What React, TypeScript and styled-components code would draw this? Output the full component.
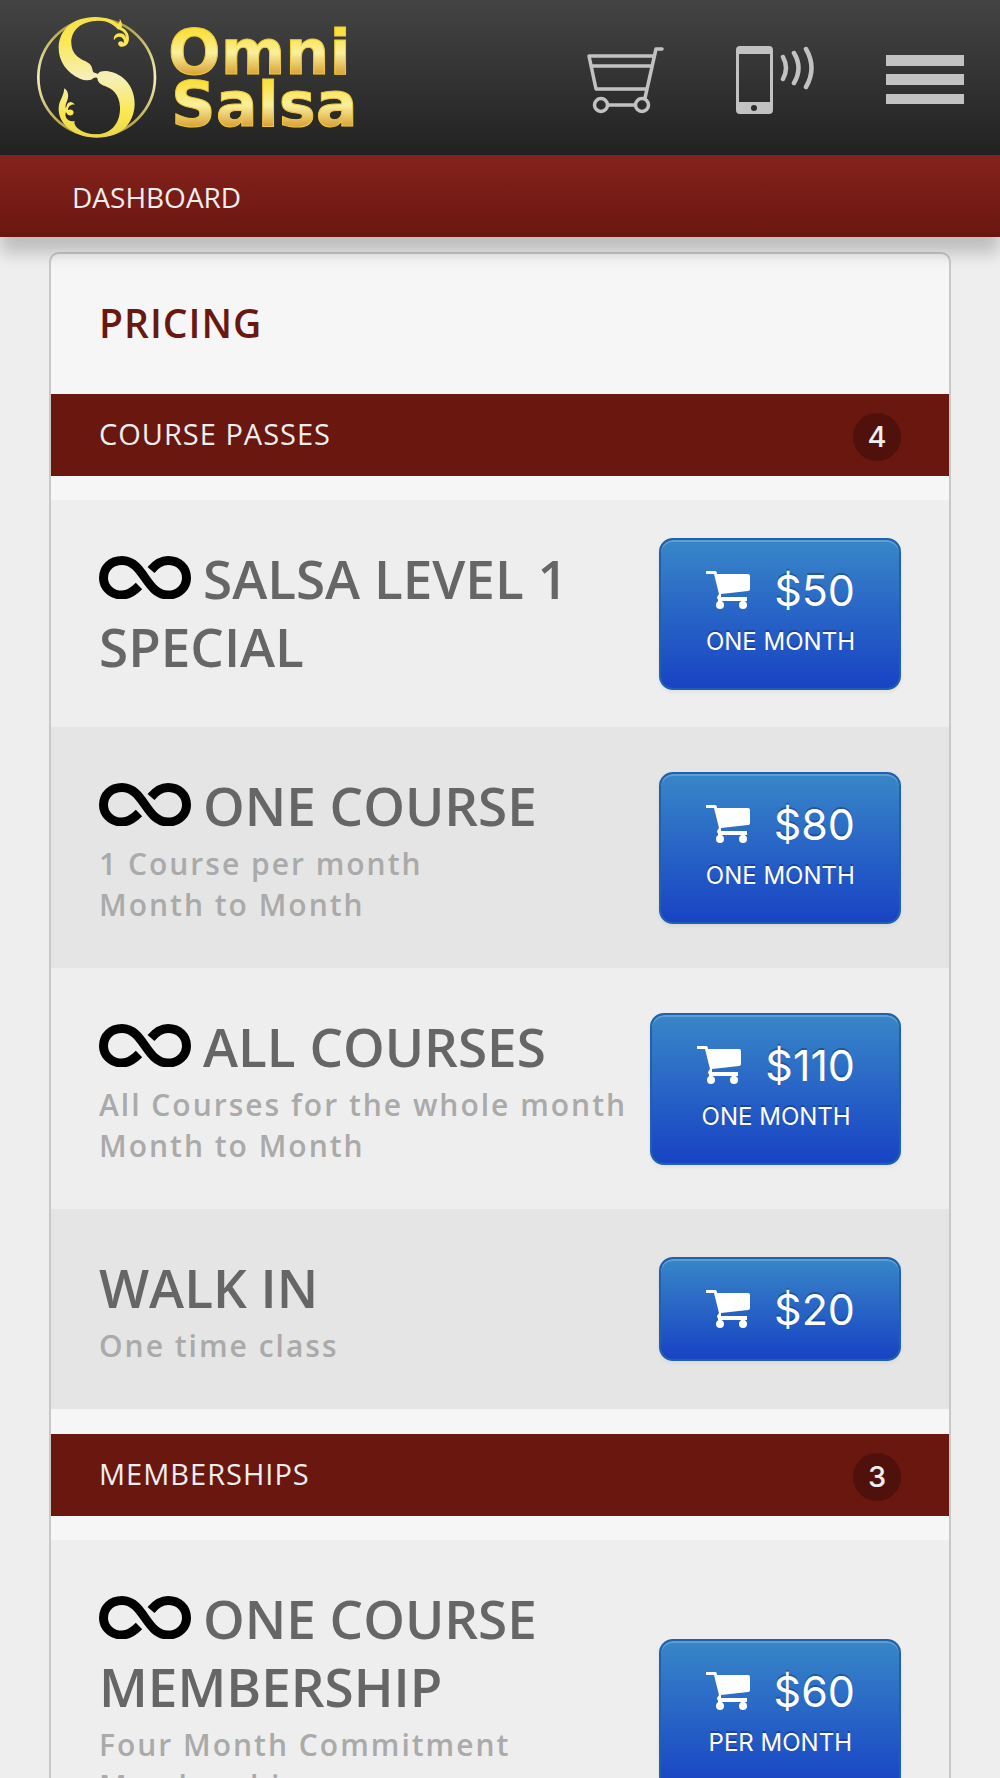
import React from "react";
import styled, { createGlobalStyle } from "styled-components";

const sans = `"Open Sans", "Noto Sans", sans-serif`;
const ui = `Inter, Roboto, sans-serif`;

const Global = createGlobalStyle`
  *, *::before, *::after { box-sizing: border-box; }
  body { margin: 0; background: #eeeeee; font-family: ${sans}; }
  h1, h2, h3, p, ul { margin: 0; padding: 0; }
  ul { list-style: none; }
`;

const Header = styled.header`
  display: flex;
  align-items: center;
  justify-content: space-between;
  height: 155px;
  padding: 0 36px;
  background: linear-gradient(#444444, #222222);
`;

const HomeLink = styled.a`
  display: block;
  svg { display: block; }
`;

const Tools = styled.nav`
  display: flex;
  align-items: center;
  gap: 72px;
  padding-top: 4px;
`;

const IconButton = styled.button`
  padding: 0;
  border: 0;
  background: none;
  color: #c2c2c2;
  cursor: pointer;
  svg { display: block; }
`;

const Crumbs = styled.nav`
  position: relative;
  z-index: 1;
  display: flex;
  align-items: center;
  height: 82px;
  padding: 2px 72px 0;
  background: linear-gradient(#85221c, #6a1710);
  box-shadow: 0 16px 16px rgba(0, 0, 0, 0.2);
`;

const Crumb = styled.a`
  color: #eeeeee;
  font-size: 28px;
  font-weight: 500;
  line-height: 40px;
  text-decoration: none;
`;

const Card = styled.main`
  margin: 15px 49px 48px;
  border: 2px solid #c8c8c8;
  border-radius: 10px;
  background: #f6f6f6;
`;

const CardTitle = styled.h1`
  padding: 42px 48px 44px;
  color: #6a1710;
  font-size: 39px;
  font-weight: 600;
  line-height: 54px;
  letter-spacing: 1px;
`;

const SectionBar = styled.div`
  display: flex;
  align-items: center;
  justify-content: space-between;
  height: 82px;
  padding: 0 48px;
  background: #6a1710;
  color: #eeeeee;
`;

const SectionTitle = styled.h2`
  padding-bottom: 2px;
  font-size: 29px;
  font-weight: 500;
  line-height: 40px;
  letter-spacing: 1px;
`;

const Count = styled.span`
  width: 48px;
  margin-top: 4px;
  border-radius: 50%;
  background: #50110c;
  font-family: ${ui};
  font-size: 29px;
  font-weight: 500;
  line-height: 48px;
  text-align: center;
`;

const Plans = styled.ul`
  padding: 24px 0 25px;
`;

const Plan = styled.li`
  display: flex;
  align-items: center;
  justify-content: space-between;
  gap: 16px;
  padding: 0 48px;
  background: #eeeeee;
  &:nth-child(even) { background: #e5e5e5; }
`;

const PlanText = styled.div`
  padding: 45px 0 43px;
`;

const PlanTitle = styled.h3`
  margin-bottom: 3px;
  color: #666666;
  font-size: 53px;
  font-weight: 600;
  line-height: 68px;
  svg { margin-right: 12px; }
`;

const PlanNote = styled.p`
  min-height: 41px;
  color: #aaaaaa;
  font-size: 30px;
  font-weight: 600;
  line-height: 41px;
  letter-spacing: 2px;
`;

const BuyButton = styled.button`
  flex: none;
  padding: 22px 44px 22px 45px;
  border: 2px solid #2160ae;
  border-radius: 14px;
  background: linear-gradient(#3886c8, #1843c4) padding-box, #2160ae;
  box-shadow: inset 0 2px 0 rgba(255, 255, 255, 0.2), 0 2px 4px rgba(0, 0, 0, 0.06);
  color: #ffffff;
  font-family: ${ui};
  text-shadow: 0 -2px 0 rgba(0, 0, 0, 0.25);
  cursor: pointer;
`;

const Price = styled.span`
  display: flex;
  align-items: center;
  justify-content: space-between;
  gap: 24px;
  font-size: 43px;
  line-height: 56px;
`;

const Term = styled.span`
  display: block;
  font-size: 24px;
  line-height: 48px;
`;

const LogoWord = styled.text`
  font-family: "DejaVu Sans", sans-serif;
  font-size: 62px;
  font-weight: 700;
`;

function Logo() {
  return (
    <svg width="332" height="124" viewBox="36 15 332 124" role="img" aria-label="Omni Salsa">
      <defs>
        <linearGradient id="emblem" x1="0" y1="20" x2="0" y2="384" gradientUnits="userSpaceOnUse">
          <stop offset="0" stopColor="#f6e04a" />
          <stop offset=".2" stopColor="#fae854" />
          <stop offset=".5" stopColor="#f6efb8" />
          <stop offset=".8" stopColor="#fae851" />
          <stop offset="1" stopColor="#ead54a" />
        </linearGradient>
        <linearGradient id="halo" x1="0" y1="20" x2="0" y2="384" gradientUnits="userSpaceOnUse">
          <stop offset="0" stopColor="#a8952f" />
          <stop offset=".5" stopColor="#f6efb8" />
          <stop offset="1" stopColor="#a8952f" />
        </linearGradient>
        <linearGradient id="lineOne" x1="0" y1="30" x2="0" y2="74" gradientUnits="userSpaceOnUse">
          <stop offset="0" stopColor="#f9e03c" />
          <stop offset=".5" stopColor="#faf09c" />
          <stop offset="1" stopColor="#d99f35" />
        </linearGradient>
        <linearGradient id="lineTwo" x1="0" y1="82" x2="0" y2="126" gradientUnits="userSpaceOnUse">
          <stop offset="0" stopColor="#f9e03c" />
          <stop offset=".5" stopColor="#faf09c" />
          <stop offset="1" stopColor="#d99f35" />
        </linearGradient>
      </defs>
      <g transform="translate(30 9) scale(.3333)">
        <circle cx="200" cy="202" r="175" fill="none" stroke="url(#halo)" strokeWidth="8" />
        <g fill="url(#emblem)">
          <path d="M195 21C232 21 252 32 264 42C268 38 270 34 269 26C276 34 277 46 275 52C292 60 300 78 296 94C293 106 284 112 272 110C262 107 262 95 272 94C278 94 280 98 280 100C286 90 276 80 268 80C260 80 256 84 252 91C249 78 260 68 270 70C280 70 286 76 288 84C288 70 276 60 262 58C262 54 256 50 244 42C228 32 212 31 196 33C150 36 122 64 124 100C126 138 152 146 174 158C188 166 186 178 190 187L204 192L202 202L190 204C184 213 166 212 150 206C110 190 85 152 86 112C88 58 128 22 195 21Z" />
          <path d="M198 200L205 190C212 181 232 182 252 188C292 202 316 242 314 285C311 342 272 383 200 383C136 383 88 346 86 300C85 270 100 266 103 235C117 244 117 262 110 276C106 286 106 290 108 296C110 278 122 268 135 284C122 282 114 290 114 300C126 294 136 306 128 314C120 320 110 314 108 306C102 318 112 338 134 333C128 348 156 373 200 373C250 371 272 332 270 290C268 252 246 236 225 228C210 223 202 214 203 206Z" />
        </g>
      </g>
      <LogoWord x="168" y="73" fill="url(#lineOne)" stroke="#efc935">Omni</LogoWord>
      <LogoWord x="171" y="125" fill="url(#lineTwo)" stroke="#efc935">Salsa</LogoWord>
    </svg>
  );
}

function CartOutline() {
  return (
    <svg width="78" height="68" viewBox="586 47 78 68" fill="none" stroke="currentColor" strokeWidth="3.500" strokeLinejoin="round" strokeLinecap="round">
      <path d="M662 50H656L645 99M654 57H589L596 90H647M591 67H651M608 106H635" />
      <circle cx="601" cy="106" r="6.500" />
      <circle cx="642" cy="106" r="6.500" />
    </svg>
  );
}

function PhoneSignal() {
  return (
    <svg width="78" height="68" viewBox="737 46 78 68" fill="none">
      <path fill="currentColor" fillRule="evenodd" d="M741 46H770Q774 46 774 50V110Q774 114 770 114H741Q737 114 737 110V50Q737 46 741 46ZM740 54V102H771V54ZM755 105A3 3 0 1 0 755 111A3 3 0 1 0 755 105Z" />
      <path d="M784 57Q790 68 784 79M795 53Q804 68 795 83M807 49Q818 68 807 87" stroke="currentColor" strokeWidth="4.500" strokeLinecap="round" />
    </svg>
  );
}

function MenuBars() {
  return (
    <svg width="78" height="50" viewBox="0 0 78 50" fill="currentColor">
      <path d="M0 0H78V11H0ZM0 19H78V30H0ZM0 39H78V49H0Z" />
    </svg>
  );
}

function CartSolid() {
  return (
    <svg width="44" height="38" viewBox="0 0 44 38" fill="currentColor">
      <path d="M0 0H9Q11 0 11 3H42Q44 3 44 5V18Q44 20 42 20L15 23V26H41V30H15Q11 29 11 26L13 23L8 3H0Z" />
      <circle cx="14" cy="34" r="4" />
      <circle cx="37" cy="34" r="4" />
      <path d="M12 28H16V33H12ZM35 28H39V33H35Z" />
    </svg>
  );
}

function InfinityMark() {
  return (
    <svg width="92" height="44" viewBox="0 -1 92 44" fill="none" stroke="#000" strokeWidth="9" role="img" aria-label="Unlimited">
      <path d="M40 30C34 36 29 39 23 39C12 39 4.500 31 4.500 22C4.500 12 12 4.500 23 4.500C45 4.500 47 39 69 39C80 39 87.500 31 87.500 22C87.500 12 80 4.500 69 4.500C62 4.500 57 8 52 14" />
    </svg>
  );
}

type PlanData = { name: string; unlimited?: boolean; notes: string[]; price: string; term?: string };

const sections: { title: string; count: number; plans: PlanData[] }[] = [
  {
    title: "COURSE PASSES",
    count: 4,
    plans: [
      { name: "SALSA LEVEL 1 SPECIAL", unlimited: true, notes: [], price: "$50", term: "ONE MONTH" },
      { name: "ONE COURSE", unlimited: true, notes: ["1 Course per month", "Month to Month"], price: "$80", term: "ONE MONTH" },
      { name: "ALL COURSES", unlimited: true, notes: ["All Courses for the whole month", "Month to Month"], price: "$110", term: "ONE MONTH" },
      { name: "WALK IN", notes: ["One time class"], price: "$20" },
    ],
  },
  {
    title: "MEMBERSHIPS",
    count: 3,
    plans: [
      { name: "ONE COURSE MEMBERSHIP", unlimited: true, notes: ["Four Month Commitment", "Membership", ""], price: "$60", term: "PER MONTH" },
    ],
  },
];

export default function App() {
  return (
    <>
      <Global />
      <Header>
        <HomeLink href="#"><Logo /></HomeLink>
        <Tools aria-label="Tools">
          <IconButton aria-label="Cart"><CartOutline /></IconButton>
          <IconButton aria-label="Call"><PhoneSignal /></IconButton>
          <IconButton aria-label="Menu"><MenuBars /></IconButton>
        </Tools>
      </Header>
      <Crumbs aria-label="Breadcrumb"><Crumb href="#">DASHBOARD</Crumb></Crumbs>
      <Card>
        <CardTitle>PRICING</CardTitle>
        {sections.map((s) => (
          <section key={s.title}>
            <SectionBar>
              <SectionTitle>{s.title}</SectionTitle>
              <Count>{s.count}</Count>
            </SectionBar>
            <Plans>
              {s.plans.map((p) => (
                <Plan key={p.name}>
                  <PlanText>
                    <PlanTitle>{p.unlimited && <InfinityMark />}{p.name}</PlanTitle>
                    {p.notes.map((n, i) => <PlanNote key={i}>{n}</PlanNote>)}
                  </PlanText>
                  <BuyButton>
                    <Price><CartSolid />{p.price}</Price>
                    {p.term && <Term>{p.term}</Term>}
                  </BuyButton>
                </Plan>
              ))}
            </Plans>
          </section>
        ))}
      </Card>
    </>
  );
}
